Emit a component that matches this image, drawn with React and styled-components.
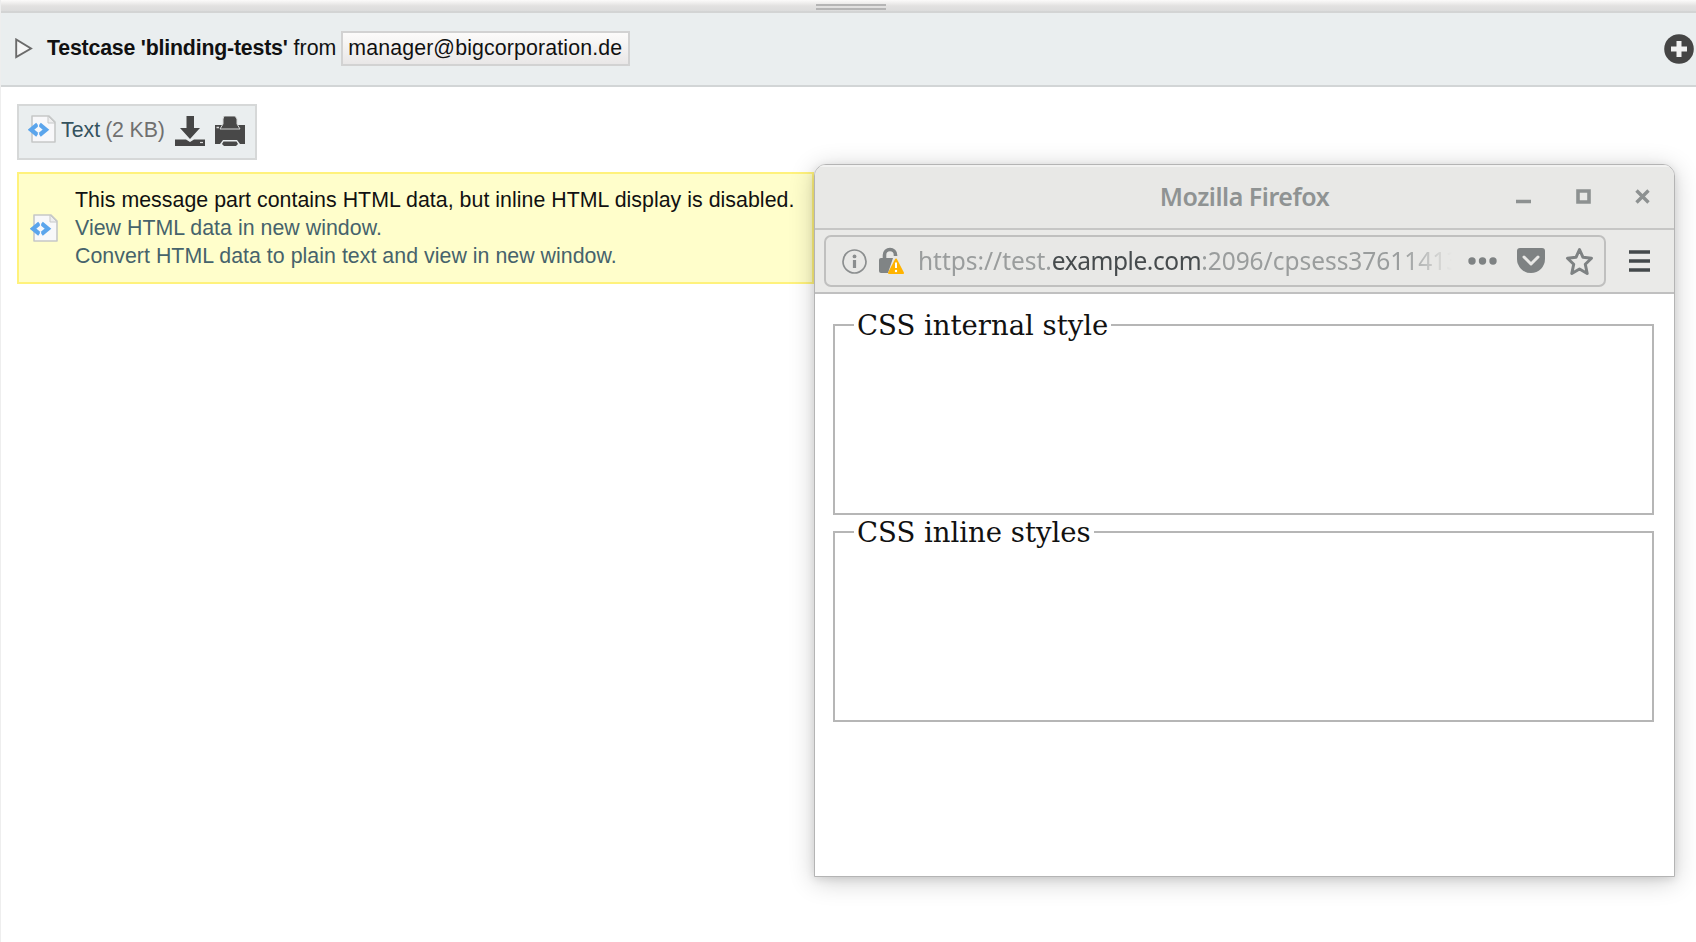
import React from 'react';
import styled, { createGlobalStyle } from 'styled-components';

const GlobalStyle = createGlobalStyle`
  * { box-sizing: border-box; }
  html, body { margin: 0; padding: 0; background: #fff; overflow: hidden; }
  svg { display: block; flex: none; }
`;

const Page = styled.main`
  position: relative;
  width: 1696px;
  height: 942px;
  overflow: hidden;
  background: #fff;
  border-left: 1px solid #eeeeee;
  font: 21.33px/28px 'Liberation Sans', Arial, sans-serif;
  color: #111;
`;

const Splitter = styled.div`
  display: flex;
  justify-content: center;
  height: 13px;
  padding: 4px 0 0 4px;
  background: linear-gradient(#fcfbfa 0, #e2e1e0 6px, #dcdcdc 11px);
  border-bottom: 2px solid #d3d4d4;
`;

const Grip = styled.div`
  width: 70px;
  height: 6px;
  border: solid #b5b5b5;
  border-width: 2px 0;
`;

const MessageHeader = styled.header`
  display: flex;
  align-items: center;
  height: 74px;
  padding: 0 2px 2px 14px;
  background: #eaeeef;
  border-bottom: 2px solid #d2d5d6;
`;

const Subject = styled.strong`
  margin-left: 14px;
  letter-spacing: -0.2px;
`;

const From = styled.span`
  margin: 0 5px 0 6px;
`;

const Address = styled.span`
  height: 35px;
  padding: 0 6px 0 5px;
  line-height: 30px;
  letter-spacing: 0.13px;
  border: 2px solid #d2d2d2;
  background: linear-gradient(#fcfbfa, #e9e7e7);
`;

const AddButton = styled.button`
  margin: 2px 0 0 auto;
  padding: 0;
  border: 0;
  background: none;
`;

const MessageBody = styled.section`
  display: flex;
  flex-direction: column;
  align-items: flex-start;
  gap: 12px;
  padding: 17px 16px;
`;

const Attachment = styled.div`
  display: flex;
  align-items: flex-start;
  width: 240px;
  height: 56px;
  padding: 9px;
  white-space: nowrap;
  background: #eaeeef;
  border: 2px solid #d6d8d8;
`;

const AttachmentName = styled.span`
  margin: 1px 0 0 5px;
  color: #35525e;
`;

const AttachmentSize = styled.span`
  margin: 1px 10px 0 5px;
  letter-spacing: -0.15px;
  color: #707070;
`;

const AttachmentActions = styled.span`
  display: flex;
  gap: 10px;
  margin-top: 1px;
`;

const Notice = styled.div`
  display: flex;
  align-items: center;
  gap: 17px;
  width: 797px;
  height: 112px;
  padding: 0 10px 0 11px;
  background: #fffecb;
  border: 2px solid #fff27c;
`;

const NoticeText = styled.div`
  display: flex;
  flex-direction: column;
  white-space: nowrap;
  letter-spacing: 0.035px;
`;

const NoticeLink = styled.a`
  color: #46636b;
`;

const Window = styled.article`
  position: absolute;
  left: 813px;
  top: 164px;
  width: 861px;
  height: 713px;
  overflow: hidden;
  background: #fff;
  border: 1.5px solid #b4b4b4;
  border-radius: 12px 12px 0 0;
  box-shadow: 0 4px 26px rgba(0, 0, 0, 0.2), 0 2px 8px rgba(0, 0, 0, 0.1);
`;

const TitleBar = styled.div`
  display: grid;
  grid-template-columns: 1fr auto 1fr;
  align-items: center;
  height: 65px;
  padding: 0 24px 3px;
  background: #e8e8e6;
  border-top: 2px solid #f2f2f1;
  border-bottom: 2px solid #c6c6c5;
`;

const WindowTitle = styled.h1`
  grid-column: 2;
  margin: 0;
  font: 600 25px/36px 'Noto Sans', sans-serif;
  letter-spacing: -0.47px;
  color: #8f9393;
`;

const WindowButtons = styled.div`
  display: flex;
  justify-content: flex-end;
  gap: 44.5px;
`;

const Toolbar = styled.div`
  display: flex;
  align-items: center;
  gap: 23px;
  height: 64px;
  padding: 0 24px 0 9px;
  background: #eaeae8;
  border-bottom: 2px solid #c0c0c0;
`;

const AddressBar = styled.div`
  display: flex;
  align-items: center;
  width: 782px;
  height: 52px;
  padding: 0 10px 0 16px;
  background: #e8e8e6;
  border: 2px solid #c0c0bf;
  border-radius: 7px;
`;

const Url = styled.div`
  width: 536px;
  height: 36px;
  margin-left: 25px;
  overflow: hidden;
  white-space: nowrap;
  font: 24.5px/36px 'Noto Sans', sans-serif;
  letter-spacing: -0.03px;
  color: #9a9d9d;
  mask-image: linear-gradient(90deg, #000 485px, transparent 534px);
`;

const Domain = styled.span`
  color: #464b4d;
  letter-spacing: -0.45px;
`;

const UrlActions = styled.div`
  display: flex;
  align-items: center;
  margin-left: auto;
  gap: 20px;
`;

const Document = styled.div`
  padding: 15px 20px 0 18px;
  font: 27.5px/31px 'DejaVu Serif', serif;
`;

const Group = styled.fieldset`
  height: 206px;
  margin: 0 0 1px;
  padding: 0 19px;
  border: 2px solid #b6b6b6;
`;

const GroupTitle = styled.legend`
  height: 31px;
  padding: 1px 3px 0;
  color: #111;
`;

const HtmlFileIcon = () => (
  <svg width="28" height="28" viewBox="0 0 28 28">
    <path d="M4 1H21L27 7V27H4Z" fill="#f8f8fa" stroke="#c6c8c8" strokeWidth="1.6" strokeLinejoin="round" />
    <path d="M20 1V8H27Z" fill="#eeeeef" stroke="#c6c8c8" strokeWidth="1" />
    <path d="M9.5 9.3L3 14.7L9.5 20M11.5 9.3L18 14.7L11.5 20" fill="none" stroke="#5ba5ec" strokeWidth="4.2" />
    <path d="M10.5 7V12M10.5 17.5V22" stroke="#f8f8fa" strokeWidth="1.3" />
  </svg>
);

const DownloadIcon = () => (
  <svg width="30" height="30" viewBox="0 0 30 30" fill="#464646">
    <path d="M11.500 0H19V12H25L15 23L5 12H11.500Z" />
    <path d="M0 23.5H11L15 26L19 23.5H30V30H0Z" />
    <path d="M25 26.5H28" stroke="#ddd" strokeWidth="1.2" />
  </svg>
);

const PrinterIcon = () => (
  <svg width="30" height="30" viewBox="0 0 30 30" fill="#484848">
    <path d="M0 9H30V28H0Z" />
    <path d="M9 0H20L22 3V8L25 13H5L8 8V3Z" stroke="#d4d6d6" strokeWidth="1" />
    <path d="M5 30V28L8 24H22L25 28V30Z" fill="#eaeeef" />
    <path d="M8.500 25.500H21.500L23 28L21 30H9L7 28Z" />
    <path d="M1.500 11.500H4" stroke="#ddd" strokeWidth="1.5" />
  </svg>
);

export default function App() {
  return (
    <Page>
      <GlobalStyle />
      <Splitter><Grip /></Splitter>
      <MessageHeader>
        <svg width="18" height="21" viewBox="0 0 18 21">
          <path d="M1.2 1.5V19L16 10.5Z" fill="#f5f6f6" stroke="#6b6b6b" strokeWidth="1.9" />
        </svg>
        <Subject>Testcase 'blinding-tests'</Subject>
        <From>from</From>
        <Address>manager@bigcorporation.de</Address>
        <AddButton aria-label="Add">
          <svg width="30" height="30" viewBox="0 0 30 30">
            <circle cx="15" cy="15" r="14.8" fill="#454545" />
            <path d="M12.500 7H17.500V12.500H23V17.500H17.500V23H12.500V17.500H7V12.500H12.500Z" fill="#f2f2f2" />
          </svg>
        </AddButton>
      </MessageHeader>
      <MessageBody>
        <Attachment>
          <HtmlFileIcon />
          <AttachmentName>Text</AttachmentName>
          <AttachmentSize>(2 KB)</AttachmentSize>
          <AttachmentActions>
            <DownloadIcon />
            <PrinterIcon />
          </AttachmentActions>
        </Attachment>
        <Notice>
          <HtmlFileIcon />
          <NoticeText>
            <span>This message part contains HTML data, but inline HTML display is disabled.</span>
            <NoticeLink>View HTML data in new window.</NoticeLink>
            <NoticeLink>Convert HTML data to plain text and view in new window.</NoticeLink>
          </NoticeText>
        </Notice>
      </MessageBody>
      <Window>
        <TitleBar>
          <WindowTitle>Mozilla Firefox</WindowTitle>
          <WindowButtons>
            <svg width="15" height="15" viewBox="0 0 15 15"><path d="M0 12.5H15" stroke="#8d9191" strokeWidth="3.4" /></svg>
            <svg width="15" height="15" viewBox="0 0 15 15"><path d="M2 2H13V13H2Z" fill="none" stroke="#8d9191" strokeWidth="3.6" /></svg>
            <svg width="15" height="15" viewBox="0 0 15 15"><path d="M1.5 1.5L13.5 13.5M13.5 1.5L1.5 13.5" stroke="#8d9191" strokeWidth="3.4" /></svg>
          </WindowButtons>
        </TitleBar>
        <Toolbar>
          <AddressBar>
            <svg width="25" height="25" viewBox="0 0 25 25">
              <circle cx="12.5" cy="12.5" r="11.5" fill="none" stroke="#8b8e8f" strokeWidth="1.7" />
              <circle cx="12.5" cy="7.4" r="1.9" fill="#8b8e8f" />
              <path d="M12.5 11V19" stroke="#8b8e8f" strokeWidth="3.2" />
            </svg>
            <svg width="26" height="28" viewBox="0 0 26 28" overflow="visible">
              <g transform="translate(12 0)">
                <path d="M5.500 12V8A5.500 5.500 0 0 1 16.500 8V9" fill="none" stroke="#808485" strokeWidth="3.6" />
                <path d="M2 11H14L9 26H2Q0 26 0 24V13Q0 11 2 11Z" fill="#808485" />
                <path d="M17 12.500L24 26H10Z" fill="#ffb300" stroke="#ffb300" strokeWidth="2" strokeLinejoin="round" />
                <path d="M17 15.5V21" stroke="#fff" strokeWidth="2" />
                <circle cx="17" cy="24" r="1.2" fill="#fff" />
              </g>
            </svg>
            <Url>https://test.<Domain>example.com</Domain>:2096/cpsess37611413</Url>
            <UrlActions>
              <svg width="29" height="8" viewBox="0 0 29 8" fill="#7e8283">
                <circle cx="4" cy="4" r="3.7" /><circle cx="14.5" cy="4" r="3.7" /><circle cx="25" cy="4" r="3.7" />
              </svg>
              <svg width="28" height="26" viewBox="0 0 28 26">
                <path d="M3 0H25Q28 0 28 3V11A14 14 0 0 1 0 11V3Q0 0 3 0Z" fill="#7e8283" />
                <path d="M7 9L14 16L21 9" fill="none" stroke="#e8e8e6" strokeWidth="3" strokeLinecap="round" strokeLinejoin="round" />
              </svg>
              <svg width="29" height="29" viewBox="0 0 29 29">
                <path d="M14.5 2.500L18 10.300L26.500 11.200L20.300 17.300L22.200 26.500L14.500 22L6.800 26.500L8.700 17.300L2.500 11.200L11 10.300Z" fill="none" stroke="#7e8283" strokeWidth="3" strokeLinejoin="round" />
              </svg>
            </UrlActions>
          </AddressBar>
          <svg width="21" height="22" viewBox="0 0 21 22">
            <path d="M0 2H21M0 11H21M0 20H21" stroke="#44494b" strokeWidth="3.6" />
          </svg>
        </Toolbar>
        <Document>
          <Group><GroupTitle>CSS internal style</GroupTitle></Group>
          <Group><GroupTitle>CSS inline styles</GroupTitle></Group>
        </Document>
      </Window>
    </Page>
  );
}
